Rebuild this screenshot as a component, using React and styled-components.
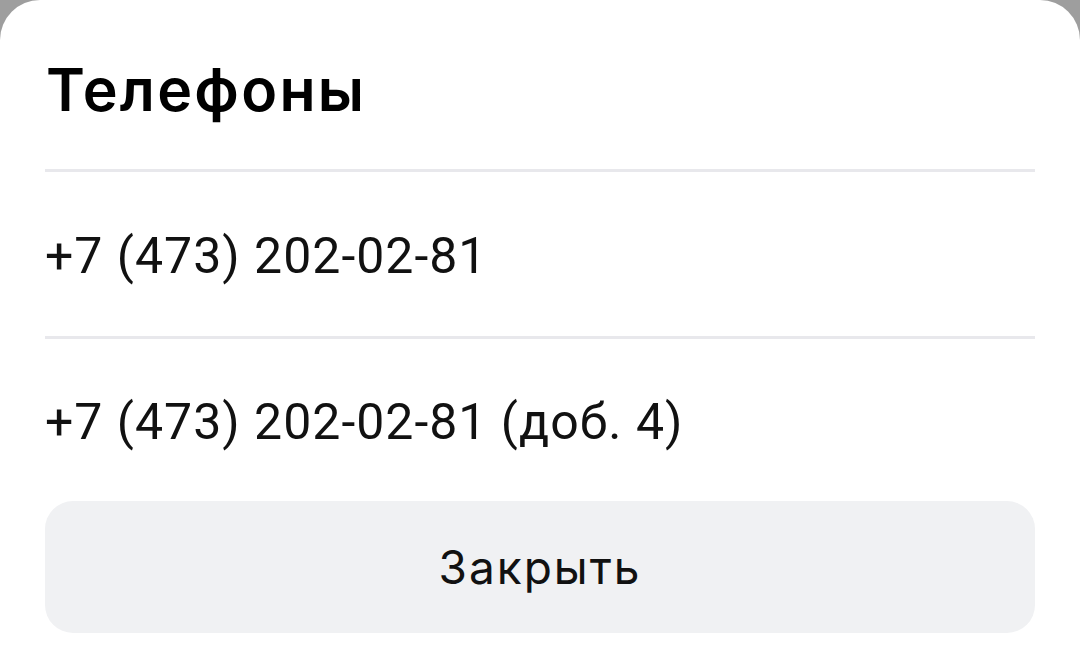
import styled, { createGlobalStyle } from 'styled-components'

const GlobalStyle = createGlobalStyle`
	html, body {
		margin: 0;
		padding: 0;
		background: #9e9e9e;
		height: 100%;
		overflow: hidden;
	}
`

const Sheet = styled.div`
	background: #ffffff;
	border-radius: 40px 40px 0 0;
	height: 672px;
	padding: 0 45px;
	box-sizing: border-box;
	display: flex;
	flex-direction: column;
`

const Header = styled.div`
	height: 172px;
	display: flex;
	align-items: center;
	border-bottom: 3px solid #e8e8ec;
	box-sizing: border-box;
`

const Title = styled.h1`
	margin: 10px 0 0 1px;
	font-family: Inter, 'Liberation Sans', sans-serif;
	font-weight: 600;
	font-size: 59px;
	color: #000000;
	letter-spacing: 2.3px;
`

const PhoneRow = styled.div`
	height: ${({ last }) => (last ? '162px' : '167px')};
	padding-top: 4px;
	display: flex;
	align-items: center;
	border-bottom: ${({ last }) => (last ? 'none' : '3px solid #e8e8ec')};
	box-sizing: border-box;
	font-family: Roboto, 'Noto Sans', sans-serif;
	font-size: 50px;
	color: #111111;
	letter-spacing: 1px;
`

const CloseButton = styled.button`
	height: 132px;
	border: none;
	border-radius: 28px;
	background: #f0f1f3;
	font-family: Inter, 'Liberation Sans', sans-serif;
	font-size: 46px;
	color: #111111;
	letter-spacing: 2px;
	cursor: pointer;
`

function App() {
	const phones = ['+7 (473) 202-02-81', '+7 (473) 202-02-81 (доб. 4)']

	return (
		<>
			<GlobalStyle />
			<Sheet>
				<Header>
					<Title>Телефоны</Title>
				</Header>
				{phones.map((phone, i) => (
					<PhoneRow key={i} last={i === phones.length - 1}>
						{phone}
					</PhoneRow>
				))}
				<CloseButton>Закрыть</CloseButton>
			</Sheet>
		</>
	)
}

export default App
